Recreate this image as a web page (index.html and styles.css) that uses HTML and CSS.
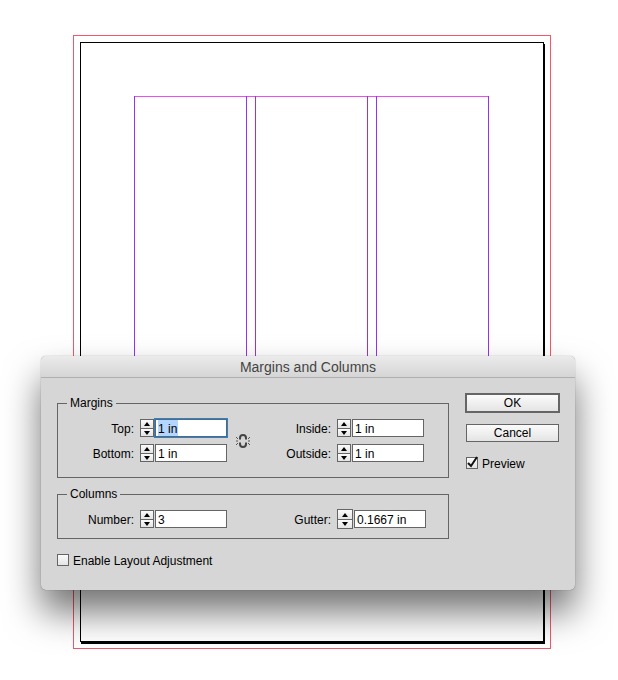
FILE: index.html
```html
<!DOCTYPE html>
<html lang="en">
<head>
<meta charset="utf-8">
<title>Margins and Columns</title>
<link rel="stylesheet" href="styles.css">
</head>
<body>
<svg class="symbols" aria-hidden="true">
  <symbol id="up" viewBox="0 0 12 8"><path d="M6 2 L9 6 H3 Z"/></symbol>
  <symbol id="down" viewBox="0 0 12 8"><path d="M3 2 H9 L6 6 Z"/></symbol>
</svg>
<main class="workspace">
  <div class="bleed">
    <div class="page">
      <div class="guides">
        <div class="column"></div>
        <div class="column"></div>
        <div class="column"></div>
      </div>
    </div>
  </div>

  <form class="dialog" role="dialog" aria-labelledby="title">
    <h1 class="titlebar" id="title">Margins and Columns</h1>
    <div class="content">
      <div class="settings">
        <fieldset class="group">
          <legend>Margins</legend>
          <div class="fields">
            <label for="top">Top:</label>
            <div class="control">
              <div class="stepper">
                <button type="button" aria-label="Increase top"><svg><use href="#up"/></svg></button>
                <button type="button" aria-label="Decrease top"><svg><use href="#down"/></svg></button>
              </div>
              <div class="entry focused"><input id="top" type="text" value="1 in"></div>
            </div>
            <button type="button" class="link" aria-label="Make all settings the same">
              <svg viewBox="0 0 14 14">
                <path class="chain" d="M4 5.500 V4 Q4 1 7 1 Q10 1 10 4 V5.500 M4 8.500 V10 Q4 13 7 13 Q10 13 10 10 V8.500"/>
                <path class="rays" d="M0 3 L2 5 M0 7 H2 M0 11 L2 9 M14 3 L12 5 M14 7 H12 M14 11 L12 9"/>
              </svg>
            </button>
            <label class="second first-row" for="inside">Inside:</label>
            <div class="control">
              <div class="stepper">
                <button type="button" aria-label="Increase inside"><svg><use href="#up"/></svg></button>
                <button type="button" aria-label="Decrease inside"><svg><use href="#down"/></svg></button>
              </div>
              <div class="entry"><input id="inside" type="text" value="1 in"></div>
            </div>
            <label for="bottom">Bottom:</label>
            <div class="control">
              <div class="stepper">
                <button type="button" aria-label="Increase bottom"><svg><use href="#up"/></svg></button>
                <button type="button" aria-label="Decrease bottom"><svg><use href="#down"/></svg></button>
              </div>
              <div class="entry"><input id="bottom" type="text" value="1 in"></div>
            </div>
            <label class="second" for="outside">Outside:</label>
            <div class="control">
              <div class="stepper">
                <button type="button" aria-label="Increase outside"><svg><use href="#up"/></svg></button>
                <button type="button" aria-label="Decrease outside"><svg><use href="#down"/></svg></button>
              </div>
              <div class="entry"><input id="outside" type="text" value="1 in"></div>
            </div>
          </div>
        </fieldset>

        <fieldset class="group columns-group">
          <legend>Columns</legend>
          <div class="fields">
            <label for="number">Number:</label>
            <div class="control">
              <div class="stepper">
                <button type="button" aria-label="Increase number"><svg><use href="#up"/></svg></button>
                <button type="button" aria-label="Decrease number"><svg><use href="#down"/></svg></button>
              </div>
              <div class="entry"><input id="number" type="text" value="3"></div>
            </div>
            <label class="second" for="gutter">Gutter:</label>
            <div class="control">
              <div class="stepper large">
                <button type="button" aria-label="Increase gutter"><svg><use href="#up"/></svg></button>
                <button type="button" aria-label="Decrease gutter"><svg><use href="#down"/></svg></button>
              </div>
              <div class="entry"><input id="gutter" type="text" value="0.1667 in"></div>
            </div>
          </div>
        </fieldset>

        <label class="check"><span class="box"><input type="checkbox"><svg class="tick" viewBox="0 0 14 14"><path d="M3 7 L6 10 L12 1"/></svg></span><span class="caption">Enable Layout Adjustment</span></label>
      </div>

      <div class="actions">
        <button type="submit" class="action default">OK</button>
        <button type="button" class="action">Cancel</button>
        <label class="check"><span class="box"><input type="checkbox" checked><svg class="tick" viewBox="0 0 14 14"><path d="M3 7 L6 10 L12 1"/></svg></span><span class="caption">Preview</span></label>
      </div>
    </div>
  </form>
</main>
</body>
</html>
```
FILE: styles.css
```css
:root {
  --line: #656565;
  --face: linear-gradient(#fbfbfb, #e4e4e4);
}

* { box-sizing: border-box; }

body {
  margin: 0;
  background: #fff;
  color: #000;
  font: 12px/18px "Liberation Sans", Arial, sans-serif;
}

button, input { font: inherit; color: inherit; }

.symbols { display: none; }

.workspace {
  display: grid;
  min-height: 100vh;
  overflow: hidden;
}

/* Document canvas */
.bleed, .dialog { grid-area: 1 / 1; }

.bleed {
  display: grid;
  margin: 35px 67px 31px 73px;
  padding: 6px;
  border: 1px solid #f4566a;
}

.page {
  display: grid;
  padding: 53px 54px 53px 53px;
  border: 1px solid #000;
  box-shadow: 1px 2px 0 #000;
}

.guides {
  display: grid;
  grid-template-columns: repeat(3, 1fr);
  gap: 8px;
  border-top: 1px solid #f04cf0;
  border-bottom: 1px solid #f04cf0;
}

.column {
  margin: -1px 0;
  border: solid #9333f2;
  border-width: 0 1px;
}

/* Dialog window */
.dialog {
  align-self: start;
  margin: 356px 43px 0 41px;
  border-radius: 5px;
  background: #d6d6d6;
  box-shadow: 0 0 1px rgba(0, 0, 0, .5), 0 22px 36px rgba(0, 0, 0, .55);
}

.titlebar {
  margin: 0;
  height: 22px;
  border-bottom: 1px solid #b0b0b0;
  border-radius: 5px 5px 0 0;
  background: linear-gradient(#ebebeb, #d5d5d5);
  color: #444;
  font-size: 14px;
  font-weight: 400;
  line-height: 22px;
  text-align: center;
}

.content {
  display: flex;
  gap: 16px;
  padding: 15px 15px 24px 16px;
}

.settings { flex: 1; padding-top: 3px; }

.group {
  min-width: 0;
  margin: 0;
  padding: 8px 9px 15px;
  border: 1px solid var(--line);
}

.columns-group {
  margin: 9px 0 15px;
  padding-bottom: 10px;
}

legend {
  padding: 0 3px;
  line-height: 15px;
}

.fields {
  display: grid;
  grid-template-columns: 67px 93px 9px 14px 1fr 108px;
  grid-auto-rows: 18px;
  gap: 7px 0;
  align-items: center;
}

.fields label {
  grid-column: 1;
  padding-top: 2px;
  text-align: right;
}

.fields .control { grid-column: 2; margin-left: 6px; }

.fields .link { grid-column: 4; grid-row: 1 / 3; }

.fields .second { grid-column: 5; }

.fields .second + .control { grid-column: 6; }

.fields .first-row, .fields .first-row + .control { grid-row: 1; }

.control {
  display: flex;
  gap: 1px;
  align-items: center;
}

.stepper {
  display: grid;
  grid-template-rows: 1fr 1fr;
  width: 14px;
  height: 18px;
  border: 1px solid var(--line);
  background: var(--line);
}

.stepper.large { width: 16px; height: 20px; }

.stepper button {
  display: flex;
  align-items: center;
  justify-content: center;
  min-height: 0;
  padding: 0;
  border: 0;
  background: var(--face);
}

.stepper button + button { border-top: 1px solid var(--line); }

.stepper svg { width: 12px; height: 8px; }

.entry {
  width: 72px;
  height: 18px;
  border: 1px solid var(--line);
  background: #fff;
}

.entry input {
  display: block;
  width: 100%;
  height: 16px;
  padding: 2px 0 0 2px;
  border: 0;
  outline: 0;
  background: transparent;
}

.entry.focused { box-shadow: 0 0 0 1px #2584d3; }

.focused input {
  background: linear-gradient(#b3d5fe, #b3d5fe) 2px 0 / 20px 16px no-repeat;
}

.link {
  width: 14px;
  height: 14px;
  padding: 0;
  border: 0;
  background: none;
}

.link svg { display: block; width: 14px; height: 14px; }

.chain { fill: none; stroke: #444; stroke-width: 2; }

.rays { fill: none; stroke: #555; stroke-width: 1; }

.check {
  display: flex;
  gap: 4px;
  align-items: center;
  height: 12px;
  white-space: nowrap;
}

.caption { padding-top: 2px; }

.box { display: grid; }

.box input {
  grid-area: 1 / 1;
  appearance: none;
  width: 12px;
  height: 12px;
  margin: 0;
  border: 1px solid var(--line);
  background: var(--face);
}

.tick {
  grid-area: 1 / 1;
  width: 14px;
  height: 14px;
  margin: -1px -1px;
  fill: none;
  stroke: #111;
  stroke-width: 2;
  visibility: hidden;
  pointer-events: none;
}

.box input:checked + .tick { visibility: visible; }

/* Buttons beside the settings */
.actions {
  display: flex;
  flex-direction: column;
  width: 95px;
}

.action {
  height: 18px;
  margin: 0 1px 15px;
  padding: 1px 0 0;
  border: 1px solid var(--line);
  background: var(--face);
  line-height: 15px;
}

.action.default {
  height: 20px;
  margin: 0 0 11px;
  border-width: 2px;
}

.actions .check { margin-left: 1px; }
```
